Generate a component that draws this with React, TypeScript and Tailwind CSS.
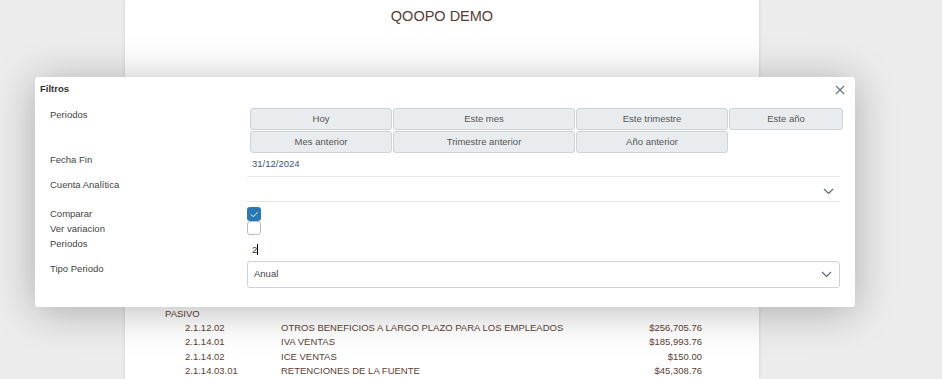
import type { ReactNode } from "react"

const rows = [
  { code: "2.1.12.02", name: "OTROS BENEFICIOS A LARGO PLAZO PARA LOS EMPLEADOS", amount: "$256,705.76" },
  { code: "2.1.14.01", name: "IVA VENTAS", amount: "$185,993.76" },
  { code: "2.1.14.02", name: "ICE VENTAS", amount: "$150.00" },
  { code: "2.1.14.03.01", name: "RETENCIONES DE LA FUENTE", amount: "$45,308.76" },
]

const Chevron = () => (
  <svg width="11" height="7" viewBox="0 0 11 7" fill="none" stroke="#5b6878" strokeWidth="1.2">
    <path d="M1 1l4.5 4.5L10 1" />
  </svg>
)

const Btn = ({ w, children }: { w: string; children: ReactNode }) => (
  <div className={`${w} h-[22px] shrink-0 flex items-center justify-center rounded-[3px] border border-[#cfd3d8] bg-[#e9ecef] text-[#555]`}>
    {children}
  </div>
)

const App = () => {
  return (
    <div className="relative w-[942px] h-[379px] overflow-hidden bg-[#ececec] font-['Liberation_Sans',Arial,sans-serif]">
      {/* paper */}
      <div className="ml-[125px] w-[634px] h-[379px] bg-white shadow-[0_0_4px_rgba(0,0,0,0.12)]">
        <h1 className="pt-[6px] text-center text-[14.5px] text-[#5a3b35]">QOOPO DEMO</h1>
        <div className="mt-[279px] text-[9.5px] text-[#5c4236]">
          <div className="pl-[40px] h-[14px] leading-[14px]">PASIVO</div>
          {rows.map(r => (
            <div key={r.code} className="flex h-[14.5px] leading-[14.5px]">
              <span className="pl-[60px] w-[156px] shrink-0">{r.code}</span>
              <span className="flex-1">{r.name}</span>
              <span className="w-[120px] shrink-0 text-right pr-[57px]">{r.amount}</span>
            </div>
          ))}
        </div>
      </div>

      {/* dialog */}
      <div className="absolute left-[35px] top-[77px] w-[820px] h-[230px] rounded-[3px] bg-white shadow-[0_4px_40px_rgba(0,0,0,0.28)] text-[9.5px] text-[#444]">
        <div className="flex h-[31px] px-[5px] pt-[5px]">
          <span className="font-bold text-[#333]">Filtros</span>
          <button className="ml-auto mr-[5px] mt-[3px] h-[10px]">
            <svg width="10" height="10" viewBox="0 0 10 10" stroke="#6b7280" strokeWidth="1.2">
              <path d="M1 1l8 8M9 1l-8 8" />
            </svg>
          </button>
        </div>

        <div className="pl-[15px] pr-[15px]">
          <div className="flex">
            <div className="w-[197px] shrink-0">Periodos</div>
            <div className="ml-[3px] flex flex-col gap-[1px]">
              <div className="flex gap-[1px]">
                <Btn w="w-[142px]">Hoy</Btn>
                <Btn w="w-[182px]">Este mes</Btn>
                <Btn w="w-[152px]">Este trimestre</Btn>
                <Btn w="w-[114px]">Este año</Btn>
              </div>
              <div className="flex gap-[1px]">
                <Btn w="w-[142px]">Mes anterior</Btn>
                <Btn w="w-[182px]">Trimestre anterior</Btn>
                <Btn w="w-[152px]">Año anterior</Btn>
              </div>
            </div>
          </div>

          <div className="flex h-[24px]">
            <div className="w-[197px] shrink-0">Fecha Fin</div>
            <div className="flex-1 border-b border-[#e6e6e6] pl-[5px] pt-[4px] text-[#3d5673]">31/12/2024</div>
          </div>

          <div className="flex h-[25px]">
            <div className="w-[197px] shrink-0 pt-[1px]">Cuenta Analítica</div>
            <div className="flex flex-1 items-center justify-end border-b border-[#e6e6e6] pr-[6px] pt-[4px]">
              <Chevron />
            </div>
          </div>

          <div className="flex h-[59px]">
            <div className="w-[197px] shrink-0 pt-[4px] leading-[15px]">
              <div>Comparar</div>
              <div>Ver variacion</div>
              <div>Periodos</div>
            </div>
            <div className="pt-[5px]">
              <div className="flex h-[14px] w-[14px] items-center justify-center rounded-[3px] bg-[#2879b5]">
                <svg width="9" height="7" viewBox="0 0 9 7" fill="none" stroke="white" strokeWidth="1">
                  <path d="M1 3.5l2.2 2.2L8 1" />
                </svg>
              </div>
              <div className="h-[14px] w-[14px] rounded-[3px] border border-[#b9bec5] bg-white" />
              <div className="pl-[5px] pt-[7px] text-[#333]">
                2<span className="inline-block h-[11px] w-px translate-y-[2px] bg-black" />
              </div>
            </div>
          </div>

          <div className="flex">
            <div className="w-[197px] shrink-0 pt-[1px]">Tipo Periodo</div>
            <div className="flex h-[27px] flex-1 items-center justify-between rounded-[3px] border border-[#cfd3d8] pl-[6px] pr-[7px]">
              <span className="text-[#444]">Anual</span>
              <Chevron />
            </div>
          </div>
        </div>
      </div>
    </div>
  )
}

export default App
